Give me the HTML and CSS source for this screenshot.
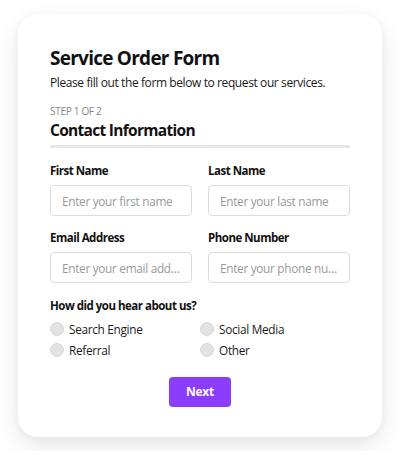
FILE: index.html
```html
<!doctype html>
<html>
<head>
<meta charset="utf-8">
<title>Service Order Form</title>
<link rel="stylesheet" href="styles.css">
</head>
<body>
<div class="card">
	<h1 class="title">Service Order Form</h1>
	<p class="sub">Please fill out the form below to request our services.</p>

	<div class="step">STEP 1 OF 2</div>
	<h2 class="sec">Contact Information</h2>
	<div class="bar"></div>

	<div class="row">
		<div class="field">
			<label>First Name</label>
			<input type="text" placeholder="Enter your first name">
		</div>
		<div class="field">
			<label>Last Name</label>
			<input type="text" placeholder="Enter your last name">
		</div>
	</div>
	<div class="row">
		<div class="field">
			<label>Email Address</label>
			<input type="text" placeholder="Enter your email address">
		</div>
		<div class="field">
			<label>Phone Number</label>
			<input type="text" placeholder="Enter your phone number">
		</div>
	</div>

	<div class="q">How did you hear about us?</div>
	<div class="opts">
		<label class="opt"><span class="dot"></span>Search Engine</label>
		<label class="opt"><span class="dot"></span>Social Media</label>
		<label class="opt"><span class="dot"></span>Referral</label>
		<label class="opt"><span class="dot"></span>Other</label>
	</div>

	<div class="btn_box"><a href="javascript:;" class="btn">Next</a></div>
</div>
</body>
</html>
```

FILE: styles.css
```css
*{margin:0;padding:0;box-sizing:border-box;}
body{background:#fff;font-family:"Open Sans","Noto Sans",sans-serif;color:#111;}
.card{width:364px;margin:14px 18px;padding:32px 32px 30px;background:#fff;border-radius:20px;box-shadow:0 9px 22px rgba(0,0,0,.1),0 0 8px rgba(0,0,0,.03);}
.title{font-size:19px;line-height:24px;font-weight:700;letter-spacing:-.75px;}
.sub{font-size:12px;line-height:18px;margin-top:4px;color:#1a1a1a;letter-spacing:-.4px;}
.step{font-size:10px;line-height:14px;color:#888;margin-top:12px;letter-spacing:-.3px;}
.sec{font-size:15.5px;line-height:20px;font-weight:700;margin-top:2px;letter-spacing:-.7px;}
.bar{height:3px;background:#e6e6e6;border-radius:2px;margin-top:5px;margin-bottom:15px;}
.row{display:flex;gap:16px;margin-bottom:14px;}
.field{flex:1;min-width:0;}
.field label{display:block;font-size:11.5px;line-height:16px;font-weight:700;margin-bottom:6px;letter-spacing:-.5px;}
.field input{display:block;width:100%;height:31px;border:1px solid #dcdcdc;border-radius:4px;padding:0 11px;font-family:inherit;font-size:11.8px;color:#333;letter-spacing:-.3px;text-overflow:ellipsis;outline:none;}
.field input::placeholder{color:#999;}
.q{font-size:11.5px;line-height:16px;font-weight:700;margin-top:15px;letter-spacing:-.5px;}
.opts{display:grid;grid-template-columns:150px 150px;margin-top:4px;}
.opt{display:flex;align-items:center;height:21px;font-size:11.8px;color:#1a1a1a;letter-spacing:-.3px;}
.dot{width:14px;height:14px;border-radius:50%;background:#e3e3e3;border:1px solid #d8d8d8;margin-right:5px;}
.btn_box{text-align:center;margin-top:17px;}
.btn{display:inline-block;width:62px;height:30px;line-height:30px;background:#8b3dff;color:#fff;border-radius:4px;font-size:12px;font-weight:700;text-decoration:none;letter-spacing:-.3px;}
```
